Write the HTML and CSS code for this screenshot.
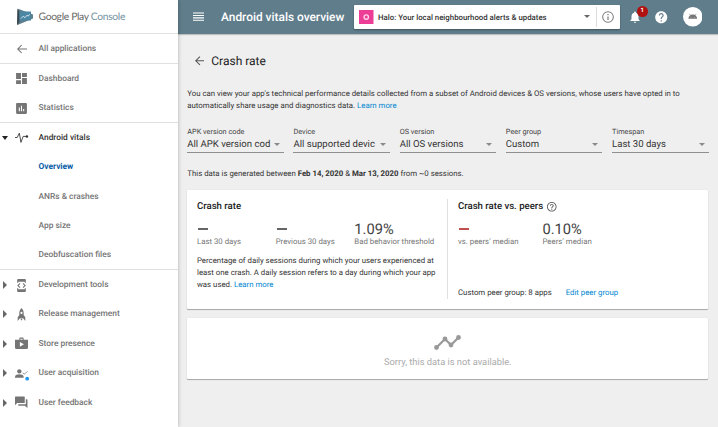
FILE: index.html
```html
<!DOCTYPE html>
<html lang="en">
<head>
<meta charset="utf-8">
<title>Android vitals overview</title>
<link rel="stylesheet" href="styles.css">
</head>
<body>
<div class="app">
  <nav class="sidebar">
    <div class="brand">
      <svg class="logo" viewBox="0 0 16 18"><path fill="#37474f" d="M0.300 1 0 17 4 14.500 3.500 3z"/><path fill="#607d8b" d="M.5.5 16 6.500v4L.5 17 2.500 13.500V4z"/><path fill="#4b86a3" d="M2.500 3.500H14v9H2.500z"/><path fill="none" stroke="#d5e9f2" stroke-width=".9" d="m4 10.500 2.200-2.300 1.800 1.500L10 7.200l1.200 1 1.500-2"/></svg>
      <span class="wordmark">Google Play <b>Console</b></span>
    </div>
    <div class="group">
      <a class="item"><span class="twist"></span><svg class="ico" viewBox="0 0 24 24"><path d="M22 11H5.800l6.100-6.100L10.500 3.500 2 12l8.500 8.500 1.400-1.400L5.800 13H22z"/></svg><span>All applications</span></a>
    </div>
    <div class="group">
      <a class="item"><span class="twist"></span><svg class="ico wide" viewBox="0 0 24 24"><path d="M2 13h9V2H2v11zm0 9h9v-7H2v7zm11 0h9V11h-9v11zm0-20v7h9V2h-9z"/></svg><span>Dashboard</span></a>
      <a class="item"><span class="twist"></span><svg class="ico wide" viewBox="0 0 24 24"><path d="M20 2H4c-1.100 0-2 .9-2 2v16c0 1.100.9 2 2 2h16c1.100 0 2-.9 2-2V4c0-1.100-.9-2-2-2zM9 17H7v-7h2v7zm4 0h-2V7h2v10zm4 0h-2v-4h2v4z"/></svg><span>Statistics</span></a>
    </div>
    <div class="group">
      <a class="item current"><span class="twist open"></span><svg class="ico wide" viewBox="0 0 24 24"><path fill="none" stroke="currentColor" stroke-width="1.600" d="M0 12h4l4-8 3 17 4-11h6"/><circle cx="22" cy="10" r="2.300"/></svg><span>Android vitals</span></a>
      <a class="item sub active">Overview</a>
      <a class="item sub">ANRs &amp; crashes</a>
      <a class="item sub">App size</a>
      <a class="item sub">Deobfuscation files</a>
    </div>
    <div class="group">
      <a class="item"><span class="twist shut"></span><svg class="ico wide" viewBox="0 0 24 24"><path d="M6 5h12v2h2V2c0-1.100-.9-2-2-2H6c-1.100 0-2 .9-2 2v5h2V5zm9.400 11.600L20 12l-4.600-4.600L14 8.800l3.200 3.200-3.200 3.200 1.400 1.400zM10 15.200 6.800 12 10 8.800 8.600 7.400 4 12l4.600 4.600L10 15.200zM18 19H6v-2H4v5c0 1.100.9 2 2 2h12c1.100 0 2-.9 2-2v-5h-2v2z"/></svg><span>Development tools</span></a>
      <a class="item"><span class="twist shut"></span><svg class="ico wide" viewBox="0 0 24 24"><path fill-rule="evenodd" d="M12 0C8.500 3 7.500 8 8 13l-3 4v7l4-5h6l4 5v-7l-3-4c.5-5-.5-10-4-13zm0 7a2 2 0 1 1 0 4 2 2 0 0 1 0-4zM10 20h4l-2 3.500z"/></svg><span>Release management</span></a>
      <a class="item"><span class="twist shut"></span><svg class="ico wide" viewBox="0 0 24 24"><path d="M16 5V3c0-1.100-.9-2-2-2h-4c-1.100 0-2 .9-2 2v2H0v15c0 1.100.9 2 2 2h20c1.100 0 2-.9 2-2V5h-8zm-6-2h4v2h-4V3zM9 18V9l7.500 4.500L9 18z"/></svg><span>Store presence</span></a>
      <a class="item"><span class="twist shut"></span><svg class="ico wide" viewBox="0 0 24 24"><circle cx="8" cy="8" r="4"/><path d="M0 20v-2c0-3 5-4.500 8-4.500s8 1.500 8 4.500v2z"/><path fill="none" stroke="currentColor" stroke-width="1.400" d="m14 11 3 2 2-1 4-4"/><circle cx="22.500" cy="21.500" r="3.500" fill="#2196f3"/></svg><span>User acquisition</span></a>
      <a class="item"><span class="twist shut"></span><svg class="ico wide" viewBox="0 0 24 24"><path d="M23 6h-3v9H6v2c0 .6.4 1 1 1h11l5 4V7c0-.6-.4-1-1-1zm-5 6V2c0-.6-.4-1-1-1H1c-.6 0-1 .4-1 1v15l4-4h13c.6 0 1-.4 1-1z"/></svg><span>User feedback</span></a>
    </div>
  </nav>
  <div class="content">
    <header class="topbar">
      <svg class="menu" viewBox="0 0 11 9"><path fill="#fff" d="M0 .5h11v1.100H0zM0 2.900h11v1.100H0zM0 5.300h11v1.100H0zM0 7.700h11v1.100H0z"/></svg>
      <h1>Android vitals overview</h1>
      <div class="picker">
        <svg class="appicon" viewBox="0 0 15 15"><path fill="#ec3e97" d="M0 0h15v15H0z"/><circle cx="7.500" cy="7.300" r="2.300" fill="none" stroke="#ffd3e8" stroke-width="1.400"/></svg>
        <span class="appname">Halo: Your local neighbourhood alerts &amp; updates</span>
        <span class="caret dark"></span>
        <span class="info"><svg viewBox="0 0 24 24"><path fill="#757575" d="M11 17h2v-6h-2v6zm1-15a10 10 0 1 0 0 20 10 10 0 0 0 0-20zm0 18.300a8.300 8.300 0 1 1 0-16.600 8.300 8.300 0 0 1 0 16.600zM11 9h2V7h-2v2z"/></svg></span>
      </div>
      <span class="bell"><svg viewBox="0 0 24 24"><path fill="#fff" d="M12 22c1.100 0 2-.9 2-2h-4c0 1.100.9 2 2 2zm6-6v-5c0-3.100-1.600-5.600-4.500-6.300V4c0-.8-.7-1.500-1.500-1.500s-1.500.7-1.500 1.500v.7C7.600 5.400 6 7.900 6 11v5l-2 2v1h16v-1l-2-2z"/></svg><span class="badge">1</span></span>
      <svg class="help" viewBox="0 0 24 24"><path fill="#fff" d="M12 2C6.480 2 2 6.480 2 12s4.480 10 10 10 10-4.480 10-10S17.520 2 12 2zm1 17h-2v-2h2v2zm2.070-7.750-.9.920C13.450 12.900 13 13.500 13 15h-2v-.5c0-1.100.45-2.100 1.170-2.830l1.240-1.260c.37-.36.59-.86.59-1.410 0-1.100-.9-2-2-2s-2 .9-2 2H8c0-2.210 1.790-4 4-4s4 1.790 4 4c0 .88-.36 1.680-.93 2.250z"/></svg>
      <svg class="avatar" viewBox="0 0 20 20"><circle cx="10" cy="10" r="10" fill="#fff"/><path fill="#757575" d="M5.500 12C5.700 9.600 7.200 7.800 10 7.800s4.300 1.800 4.500 4.200z"/><path stroke="#757575" stroke-width=".6" d="m6.500 7 1.200 1.800M13.500 7l-1.200 1.800"/><circle cx="8.200" cy="10.400" r=".4" fill="#fff"/><circle cx="11.800" cy="10.400" r=".4" fill="#fff"/></svg>
    </header>
    <main>
      <div class="heading"><svg viewBox="0 0 10 10"><path fill="none" stroke="#555" stroke-width="1.100" d="M10 5H1M5.200.6.800 5l4.400 4.400"/></svg><h2>Crash rate</h2></div>
      <p class="intro">You can view your app's technical performance details collected from a subset of Android devices &amp; OS versions, whose users have opted in to<br>automatically share usage and diagnostics data. <a>Learn more</a></p>
      <div class="filters">
        <div class="filter"><label>APK version code</label><div class="value"><span>All APK version cod</span><i class="caret"></i></div></div>
        <div class="filter"><label>Device</label><div class="value"><span>All supported devic</span><i class="caret"></i></div></div>
        <div class="filter"><label>OS version</label><div class="value"><span>All OS versions</span><i class="caret"></i></div></div>
        <div class="filter"><label>Peer group</label><div class="value"><span>Custom</span><i class="caret"></i></div></div>
        <div class="filter"><label>Timespan</label><div class="value"><span>Last 30 days</span><i class="caret"></i></div></div>
      </div>
      <p class="range">This data is generated between <b>Feb 14, 2020</b> &amp; <b>Mar 13, 2020</b> from ~0 sessions.</p>
      <section class="card stats">
        <div class="pane left">
          <h3>Crash rate</h3>
          <div class="metrics">
            <div><strong><i class="dash"></i></strong><small>Last 30 days</small></div>
            <div><strong><i class="dash"></i></strong><small>Previous 30 days</small></div>
            <div><strong>1.09%</strong><small>Bad behavior threshold</small></div>
          </div>
          <p>Percentage of daily sessions during which your users experienced at<br>least one crash. A daily session refers to a day during which your app<br>was used. <a>Learn more</a></p>
        </div>
        <div class="pane right">
          <h3>Crash rate vs. peers <svg viewBox="0 0 24 24"><path fill="#555" d="M11 18h2v-2h-2v2zm1-16C6.480 2 2 6.480 2 12s4.480 10 10 10 10-4.480 10-10S17.520 2 12 2zm0 18.300c-4.570 0-8.300-3.730-8.300-8.300s3.730-8.300 8.300-8.300 8.300 3.730 8.300 8.300-3.730 8.300-8.300 8.300zM12 6c-2.210 0-4 1.790-4 4h2c0-1.100.9-2 2-2s2 .9 2 2c0 2-3 1.750-3 5h2c0-2.250 3-2.500 3-5 0-2.210-1.790-4-4-4z"/></svg></h3>
          <div class="metrics">
            <div><strong><i class="dash red"></i></strong><small>vs. peers’ median</small></div>
            <div><strong>0.10%</strong><small>Peers’ median</small></div>
          </div>
          <p class="peer">Custom peer group: 8 apps <a>Edit peer group</a></p>
        </div>
      </section>
      <section class="card empty">
        <svg viewBox="0 0 27 15"><path fill="none" stroke="#999" stroke-width="2.200" d="m2.500 12.500 8.500-8.500 6 6 7.500-7.500"/><g fill="#999"><circle cx="2.500" cy="12.500" r="2.400"/><circle cx="11" cy="4" r="2.400"/><circle cx="17" cy="10" r="2.400"/><circle cx="24.500" cy="2.500" r="2.400"/></g></svg>
        <span>Sorry, this data is not available.</span>
      </section>
    </main>
  </div>
</div>
</body>
</html>
```
FILE: styles.css
```css
* { box-sizing: border-box; }
body { margin: 0; font: 400 7.820px/12px Roboto, sans-serif; color: #333; overflow: hidden; text-rendering: geometricPrecision; }
h1, h2, h3, p { margin: 0; }
svg { display: block; flex: none; }
a { color: #0288d1; }
.app { display: flex; width: 718px; height: 427px; }

.sidebar { flex: none; width: 178px; background: #fff; position: relative; z-index: 1; box-shadow: 0 0 4px rgba(0,0,0,.28); }
.brand { height: 33px; display: flex; align-items: center; padding-left: 17px; }
.logo { width: 16px; height: 18px; margin-right: 5.500px; }
.wordmark { font: 400 10.300px/14px Lato, sans-serif; color: #686868; letter-spacing: -.330px; white-space: nowrap; }
.wordmark b { font-weight: 400; color: #7593a2; }
.group { border-top: 1px solid #e0e0e0; margin-bottom: -.800px; }
.item { display: flex; align-items: center; height: 29.400px; padding-top: 1.200px; font-size: 8.400px; font-weight: 500; color: #757575; white-space: nowrap; }
.sub { padding-left: 38.500px; }
.current { color: #333; }
.item.active { color: #0b5ea8; font-weight: 700; }
.twist { width: 7px; height: 8px; margin-right: 8px; flex: none; }
.shut::before { content: ""; display: block; margin-left: 3px; width: 0; border: 4px solid transparent; border-left-color: #666; border-right: 0; }
.open::before { content: ""; display: block; margin: 2px 0 0 1.500px; width: 0; border: 3.500px solid transparent; border-top: 4px solid #222; border-bottom: 0; }
.ico { width: 12px; height: 12px; margin: 0 11px 0 .500px; fill: currentColor; overflow: visible; }
.wide { width: 13px; height: 13px; margin: 0 10.500px 0 0; }

.content { flex: 1; background: #efefef; }
.topbar { height: 33.500px; background: #607d8b; display: flex; align-items: center; padding-left: 15px; box-shadow: 0 1px 1px rgba(0,0,0,.2); }
.menu { width: 11px; height: 9px; }
h1 { font: 500 11.900px/16px Roboto, sans-serif; color: #fff; width: 133px; margin-left: 17px; white-space: nowrap; flex: none; }
.picker { width: 265.500px; height: 24px; background: #fff; border-radius: 1px; display: flex; align-items: center; padding-left: 5px; flex: none; box-shadow: 0 1px 2px rgba(0,0,0,.35); }
.appicon { width: 14.500px; height: 14.500px; }
.appname { flex: 1; margin-left: 4.500px; padding-top: 2px; font-weight: 500; color: #333; white-space: nowrap; }
.caret { flex: none; border: 3px solid transparent; border-top-color: #8a8a8a; border-bottom: 0; }
.caret.dark { border-top-color: #666; margin-right: 6px; }
.info { border-left: 1px solid #ddd; height: 20px; width: 24px; display: flex; align-items: center; justify-content: center; }
.info svg { width: 14px; height: 14px; }
.bell { position: relative; margin-left: 8.500px; }
.bell svg { width: 14px; height: 14px; }
.badge { position: absolute; left: 9px; top: -3.500px; width: 10.500px; height: 10.500px; border-radius: 50%; background: #b01212; color: #fff; font: 700 6px/10.500px Roboto, sans-serif; text-align: center; }
.help { width: 14.500px; height: 14.500px; margin-left: 12px; }
.avatar { width: 19.500px; height: 19.500px; margin-left: 14px; }

main { padding-left: 9.300px; }
.heading { display: flex; align-items: center; height: 20px; margin-top: 17.500px; padding-left: 7.500px; }
.heading svg { width: 9.500px; height: 9.500px; margin-right: 7px; }
h2 { font: 400 12px/16px Roboto, sans-serif; color: #212121; }
.intro { margin-top: 16.500px; white-space: nowrap; }
.filters { display: grid; grid-template-columns: repeat(5, 96.500px); column-gap: 9.700px; margin-top: 15.500px; }
.filter label { display: block; height: 10px; font-size: 7.300px; line-height: 10px; color: #444; white-space: nowrap; }
.value { display: flex; align-items: center; justify-content: space-between; height: 15.500px; padding: 1px 4px 0 0; border-bottom: 1px solid #8f8f8f; font-size: 9.570px; white-space: nowrap; color: #333; }
.range { margin-top: 15.500px; }
.range b { font-weight: 700; }
.card { width: 521px; background: #fff; border-radius: 1px; box-shadow: 0 1px 1px rgba(0,0,0,.3), 0 0 1px rgba(0,0,0,.15); }
.stats { display: flex; height: 119px; margin-top: 9.500px; padding: 9.500px 0; }
.pane { display: flex; flex-direction: column; white-space: nowrap; }
.left { width: 261px; padding-left: 9.700px; border-right: 1px solid #e0e0e0; }
.right { padding-left: 9.700px; }
h3 { display: flex; align-items: center; height: 15px; font: 500 9.600px/15px Roboto, sans-serif; color: #212121; }
h3 svg { width: 11.500px; height: 11.500px; margin: 1px 0 0 2.500px; }
.metrics { display: grid; grid-template-columns: 78.700px 78.700px 1fr; margin-top: 7.500px; }
.right .metrics { grid-template-columns: 84.500px 1fr; }
.metrics strong { display: flex; align-items: center; height: 15px; font: 400 14.700px/15px Roboto, sans-serif; color: #424242; }
.metrics small { display: block; font-size: 7.820px; line-height: 9px; color: #757575; }
.dash { width: 10px; height: 1.500px; margin-left: 1px; background: #666; }
.dash.red { background: #c0504d; }
.left p { margin-top: 9.500px; }
.peer { margin-top: auto; }
.peer a { margin-left: 12px; }
.empty { height: 60.500px; margin-top: 9.500px; display: flex; flex-direction: column; align-items: center; padding-top: 16.500px; }
.empty svg { width: 27px; height: 15px; }
.empty span { margin-top: 7px; font-size: 9.300px; line-height: 12px; color: #aaa; }
```
